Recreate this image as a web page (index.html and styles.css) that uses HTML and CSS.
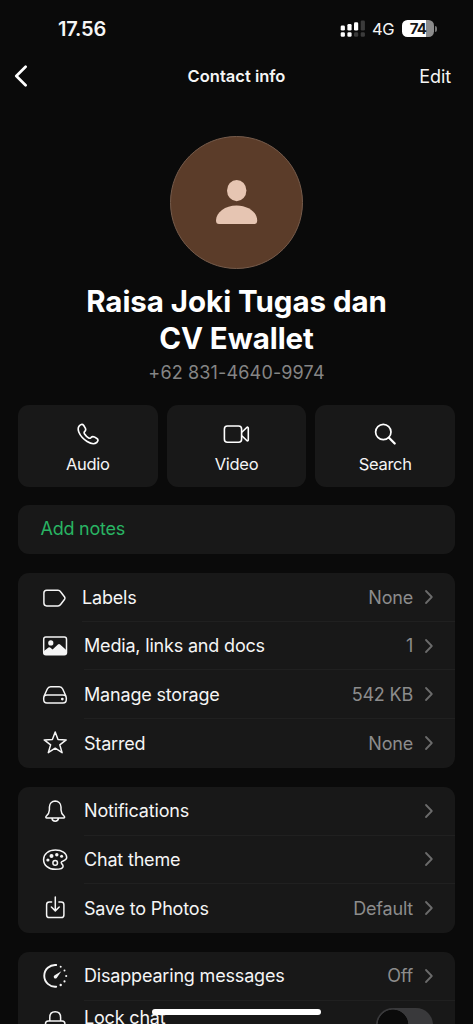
FILE: index.html
```
<!DOCTYPE html>
<html lang="en">
<head>
<meta charset="utf-8">
<title>Contact info</title>
<link rel="stylesheet" href="styles.css">
</head>
<body>
<svg width="0" height="0" class="defs"><defs>
<symbol id="chev" viewBox="0 0 10 16"><path d="M2 2 7.800 8l-5.800 6" fill="none" stroke="currentColor" stroke-width="1.800" stroke-linecap="round" stroke-linejoin="round"/></symbol>
</defs></svg>
<div class="screen">
  <header class="status">
    <span class="time">17.56</span>
    <div class="status-right">
      <svg class="signal" width="26" height="18" viewBox="0 0 26 18"><g fill="#fff"><rect x="0.7" y="5.5" width="4.2" height="5" rx="1.3"/><rect x="7.4" y="4" width="4.2" height="6.5" rx="1.3"/><rect x="14" y="2.3" width="4.2" height="8.2" rx="1.3"/><rect x="0.7" y="12.3" width="4.2" height="4.4" rx="1.3"/><rect x="7.4" y="12.3" width="4.2" height="4.4" rx="1.3"/></g><g fill="#3b3b3b"><rect x="20.7" y="0.5" width="4.2" height="10" rx="1.3"/><rect x="14" y="12.3" width="4.2" height="4.4" rx="1.3"/><rect x="20.7" y="12.3" width="4.2" height="4.4" rx="1.3"/></g></svg>
      <span class="network">4G</span>
      <span class="battery"><span class="battery-body">74</span><span class="battery-tip"></span></span>
    </div>
  </header>
  <nav class="nav">
    <svg class="back" width="14" height="22" viewBox="0 0 14 22"><path d="M11.6 1.8 2.3 11l9.3 9.2" fill="none" stroke="#fff" stroke-width="2.7" stroke-linecap="round" stroke-linejoin="round"/></svg>
    <span class="nav-title">Contact info</span>
    <span class="edit">Edit</span>
  </nav>
  <section class="profile">
    <div class="avatar"><svg width="42" height="44" viewBox="0 0 42 44"><g fill="#e6c5b2"><ellipse cx="20.7" cy="10.6" rx="9.7" ry="10.6"/><path d="M3 44C1 44 0 42.6 0 40.4 0 32.5 9.2 25.6 20.6 25.6S41.2 32.500 41.200 40.400C41.200 42.600 40.200 44 38.200 44Z"/></g></svg></div>
    <h1 class="name">Raisa Joki Tugas dan<br>CV Ewallet</h1>
    <div class="phone">+62 831-4640-9974</div>
  </section>
  <section class="actions">
    <div class="action"><svg width="28" height="24" viewBox="0 0 28 24"><path d="M5 4.300C6.300 2.500 8.300 1.700 9.600 3.300L11.300 6.100C12.100 7.500 11.700 8.500 10.600 9.600C9.900 10.400 10 11.100 10.600 12C11.700 13.700 13.100 15.100 14.700 16C15.600 16.500 16.200 16.300 16.900 15.600C18 14.400 19 14.200 20.300 14.900L22.900 16.500C24.600 17.600 24.100 19.300 22.700 20.500C20.500 22.400 17.100 22 13.100 19.500C9.300 17.100 6.400 13.900 4.900 10.300C3.900 7.800 4 5.800 5 4.300Z" fill="none" stroke="#fff" stroke-width="1.65" stroke-linejoin="round"/></svg><span>Audio</span></div>
    <div class="action"><svg width="28" height="24" viewBox="0 0 28 24"><g fill="none" stroke="#fff" stroke-width="1.6" stroke-linejoin="round"><rect x="2.400" y="4" width="17.200" height="16.200" rx="3"/><path d="M19.800 10.300 24.500 5.700C25.500 4.700 26.300 5 26.300 6.300V17.700C26.300 19 25.500 19.300 24.500 18.300L19.800 13.700"/></g></svg><span>Video</span></div>
    <div class="action"><svg width="28" height="24" viewBox="0 0 28 24"><circle cx="12.300" cy="10" r="7.700" fill="none" stroke="#fff" stroke-width="1.700"/><path d="m18 15.700 5.700 5.800" stroke="#fff" stroke-width="2.300" stroke-linecap="round"/></svg><span>Search</span></div>
  </section>
  <section class="card notes"><span>Add notes</span></section>
  <section class="card">
    <div class="row labels"><svg class="icon" viewBox="0 0 28 28"><path d="M5.700 6.300H17C18.200 6.300 18.900 6.700 19.600 7.700L23.600 13C24.100 13.700 24.100 14.500 23.600 15.200L19.600 20.500C18.900 21.500 18.200 21.900 17 21.900H5.700C3.900 21.900 2.900 20.900 2.900 19.100V9.100C2.900 7.300 3.900 6.300 5.700 6.300Z"/></svg><div class="line"><span class="label">Labels</span><span class="value">None</span><svg class="chev"><use href="#chev"/></svg></div></div>
    <div class="row"><svg class="icon" viewBox="0 0 28 28"><rect x="2.700" y="5" width="22.800" height="17.700" rx="2.200"/><circle class="solid" cx="9.800" cy="10.900" r="2.600"/><path class="solid" d="M2.700 19.300 7.500 15.500Q8.300 15 9.100 15.600L11.600 17.500 16.900 12.400Q18 11.500 19.100 12.400L25.500 18.200V21Q25.500 22.700 23.700 22.700H4.500Q2.700 22.700 2.700 21Z"/></svg><div class="line"><span class="label">Media, links and docs</span><span class="value">1</span><svg class="chev"><use href="#chev"/></svg></div></div>
    <div class="row"><svg class="icon" viewBox="0 0 28 28"><path d="M3 15.300 6.300 8Q7.300 5.800 9.600 5.800H18.400Q20.700 5.800 21.700 8L25 15.300M6 14H22Q25.300 14 25.300 17.200V18.500Q25.300 22 22 22H6Q2.700 22 2.700 18.500V17.200Q2.700 14 6 14Z"/><circle class="solid" cx="21.300" cy="18.100" r="1.400"/></svg><div class="line"><span class="label">Manage storage</span><span class="value">542 KB</span><svg class="chev"><use href="#chev"/></svg></div></div>
    <div class="row"><svg class="icon" viewBox="0 0 28 28"><path d="M14.200 3 17 10.600 25.200 10.900 18.800 15.900 21.100 23.700 14.200 19.200 7.300 23.700 9.600 15.900 3.200 10.900 11.400 10.600Z"/></svg><div class="line"><span class="label">Starred</span><span class="value">None</span><svg class="chev"><use href="#chev"/></svg></div></div>
  </section>
  <section class="card">
    <div class="row"><svg class="icon" viewBox="0 0 28 28"><path d="M14.200 4C17.500 4.100 19.900 6.600 20 10V13C20.100 16.300 21.300 17.600 23.200 19.300C24 20.100 23.500 20.900 22.700 20.900H5.700C4.900 20.900 4.400 20.100 5.200 19.300C7.100 17.600 8.300 16.300 8.400 13V10C8.500 6.600 10.900 4.100 14.200 4ZM10.900 21.200C11.100 23 12.400 24.300 14.200 24.300S17.300 23 17.500 21.200"/></svg><div class="line"><span class="label">Notifications</span><svg class="chev"><use href="#chev"/></svg></div></div>
    <div class="row"><svg class="icon" viewBox="0 0 28 28"><path d="M14.500 4.100C7.500 4.100 2.600 8 2.600 13.400C2.600 19.400 7.700 23.300 14.300 23.300C18.800 23.300 22.100 22.300 22.100 20.200C22.100 18.300 20 17.900 20.200 16.400C20.400 14.800 25.700 15 25.700 11.500C25.700 7.300 20.900 4.100 14.500 4.100Z"/><circle cx="14.200" cy="16.900" r="2.300"/><g class="solid"><circle cx="6.900" cy="14" r="1.600"/><circle cx="10.500" cy="9.900" r="2"/><circle cx="15.800" cy="8.700" r="1.700"/><circle cx="20.600" cy="10.200" r="1.500"/></g></svg><div class="line"><span class="label">Chat theme</span><svg class="chev"><use href="#chev"/></svg></div></div>
    <div class="row"><svg class="icon" viewBox="0 0 28 28"><path d="M10.600 8.100H8.300Q5.600 8.100 5.600 10.800V20.900Q5.600 23.600 8.300 23.600H20.200Q22.900 23.600 22.900 20.900V10.800Q22.900 8.100 20.200 8.100H17.900M14.300 3V16.200M10.400 13 14.300 16.900 18.200 13"/></svg><div class="line"><span class="label">Save to Photos</span><span class="value">Default</span><svg class="chev"><use href="#chev"/></svg></div></div>
  </section>
  <section class="card last">
    <div class="row"><svg class="icon" viewBox="0 0 28 28"><path class="thick" d="M15.200 3A10.900 10.900 0 1 0 15.200 24.700"/><path class="solid" d="M20.300 9.300 15.700 16Q14.300 17.200 13.100 16 12.100 14.700 13.300 13.500Z"/><g class="solid"><circle cx="19.700" cy="4.700" r="1"/><circle cx="23.500" cy="8.600" r="1"/><circle cx="25.200" cy="14" r="1.050"/><circle cx="23.500" cy="19.400" r="1.050"/><circle cx="19.700" cy="23" r="1.200"/></g></svg><div class="line"><span class="label">Disappearing messages</span><span class="value">Off</span><svg class="chev"><use href="#chev"/></svg></div></div>
    <div class="row lock"><svg class="icon" viewBox="0 0 28 28"><path d="M8.800 17.500V14.500C8.800 11 11 8.800 14.200 8.800S19.600 11 19.600 14.500V17.500M7.300 17.900H21.100Q23.900 17.900 23.900 20.700V29H4.500V20.700Q4.500 17.900 7.300 17.900Z"/></svg><div class="line"><span class="label">Lock chat</span><span class="toggle"></span></div></div>
  </section>
  <div class="home"></div>
</div>
</body>
</html>
```
FILE: styles.css
```
* { box-sizing: border-box; }
body { margin: 0; background: #0a0a0a; }
.defs { position: absolute; }
.screen { position: relative; width: 473px; height: 1024px; overflow: hidden; background: #0a0a0a; color: #f5f5f5; font-family: Inter, "Liberation Sans", sans-serif; font-size: 18px; white-space: nowrap; }
.status { height: 56px; padding: 1px 36px 0 58px; display: flex; align-items: center; justify-content: space-between; }
.time { font-size: 20px; font-weight: 600; letter-spacing: -0.2px; }
.status-right { display: flex; align-items: center; }
.network { margin-left: 6px; width: 23px; font-size: 16.500px; letter-spacing: -0.5px; }
.battery { display: flex; align-items: center; margin-left: 7px; }
.battery-body { width: 32px; height: 17px; border-radius: 5.500px; background: linear-gradient(90deg, #fff 74%, #8c8c8c 74%); color: #171717; font-size: 15px; font-weight: 700; line-height: 17px; text-align: center; letter-spacing: -0.8px; }
.battery-tip { width: 2px; height: 6px; margin-left: 1px; border-radius: 0 2px 2px 0; background: #777; }
.nav { height: 40px; padding: 0 22px 0 14px; display: grid; grid-template-columns: 68px 1fr 60px; align-items: center; }
.back { display: block; }
.nav-title { text-align: center; font-size: 16.500px; font-weight: 600; letter-spacing: 0; }
.edit { text-align: right; letter-spacing: -0.1px; }
.profile { padding-top: 40px; display: flex; flex-direction: column; align-items: center; }
.avatar { width: 133px; height: 133px; padding-bottom: 2px; border-radius: 50%; border: 1px solid #755b4b; background: #5b3c29; display: flex; align-items: center; justify-content: center; }
.name { margin: 14px 0 0; font-size: 29.500px; line-height: 37px; font-weight: 700; letter-spacing: -0.05px; text-align: center; color: #fff; }
.phone { height: 30px; line-height: 30px; color: #858585; font-size: 18px; letter-spacing: 0.15px; margin-top: 1px; }
.actions { margin: 17px 18px 0; display: grid; grid-template-columns: repeat(3, 1fr); gap: 9px; }
.action { height: 82px; border-radius: 11px; background: #181818; display: flex; flex-direction: column; align-items: center; padding-top: 17px; font-size: 16.500px; letter-spacing: -0.300px; line-height: 20px; gap: 8px; }
.card { margin: 19.300px 18px 0; border-radius: 11px; background: #181818; overflow: hidden; }
.notes { height: 49px; margin-top: 18px; padding: 0 22.500px; line-height: 47px; letter-spacing: -0.250px; color: #29b463; }
.row { height: 48.600px; padding-left: 23px; display: flex; align-items: center; }
.icon { flex: none; width: 28px; height: 28px; fill: none; stroke: #f5f5f5; stroke-width: 1.500; stroke-linejoin: round; stroke-linecap: round; }
.solid { fill: #f5f5f5; stroke: none; }
.thick { stroke-width: 1.900; }
.line { flex: 1; height: 100%; margin-left: 15px; padding-right: 21px; display: flex; align-items: center; border-bottom: 1px solid #202020; }
.labels .line { margin-left: 13px; }
.row:last-child .line { border-bottom: 0; }
.label { flex: 1; letter-spacing: -0.180px; }
.value { color: #8c8c8c; letter-spacing: -0.200px; }
.chev { width: 10px; height: 16px; margin-left: 11px; color: #6b6b6b; }
.last { height: 90px; }
.lock { height: 48px; align-items: flex-start; }
.lock .icon { margin-top: 2px; }
.lock .line { height: 33px; padding-right: 22px; }
.toggle { align-self: flex-start; flex: none; width: 57px; height: 34px; margin-top: 7px; border-radius: 17px; background: radial-gradient(circle at 17px 17px, #0b0b0b 15px, #39393b 15.700px); }
.home { position: absolute; left: 152px; top: 1009px; width: 169px; height: 6px; border-radius: 3px; background: #fff; }
```
